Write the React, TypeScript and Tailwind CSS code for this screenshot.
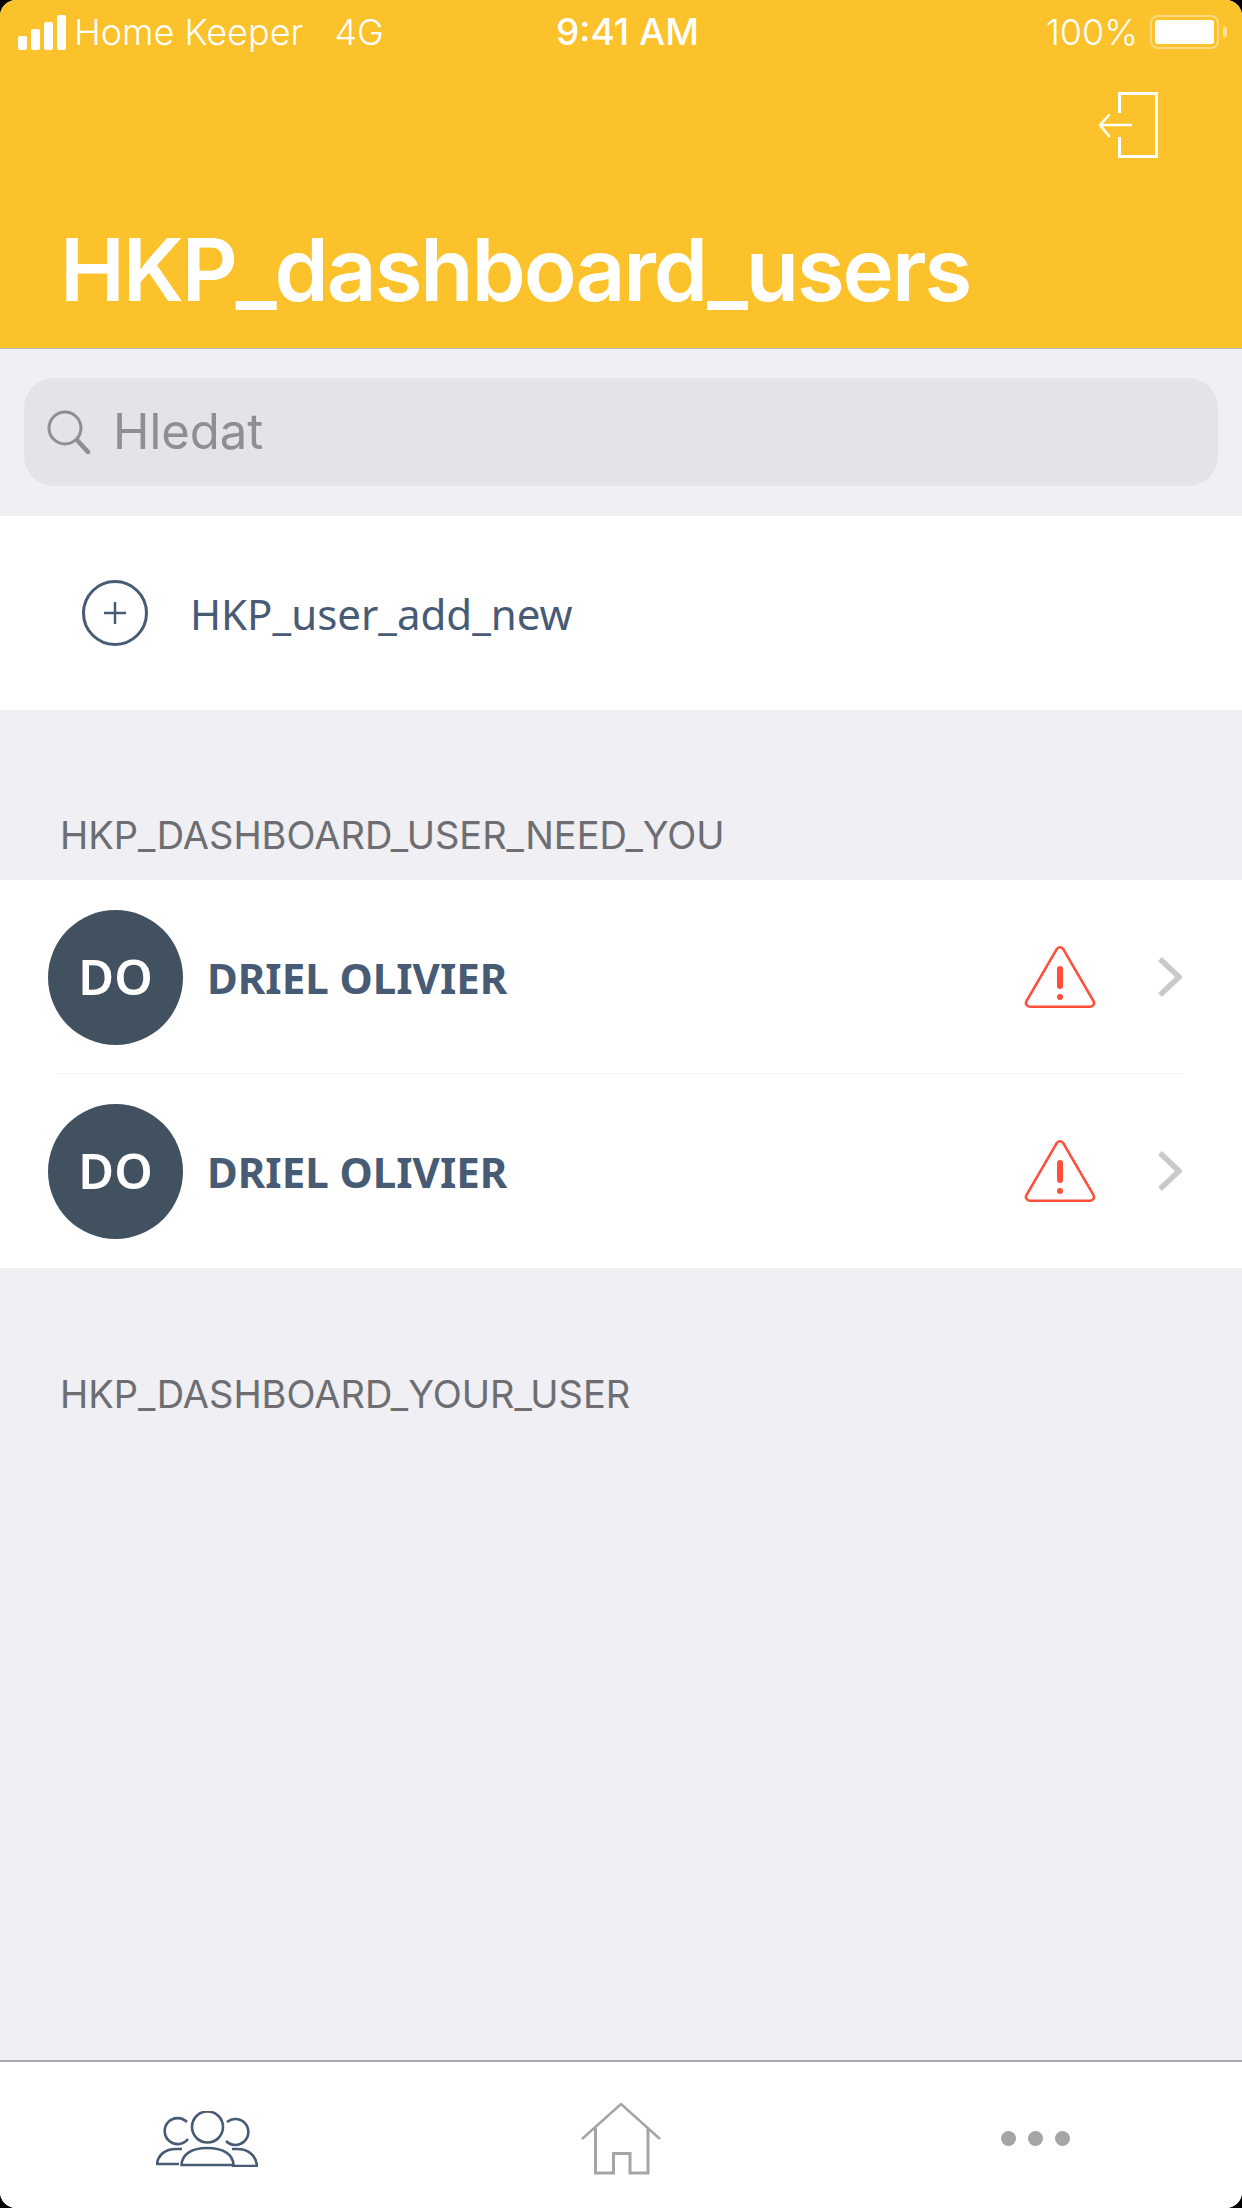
const needYou = [{ id: 1, initials: 'DO', name: 'DRIEL OLIVIER' }, { id: 2, initials: 'DO', name: 'DRIEL OLIVIER' }];

function SignalBars() {
  return (
    <div className="flex items-end gap-[4px]">
      <div className="w-[9px] h-[14px] rounded-[2px] bg-white" />
      <div className="w-[9px] h-[21px] rounded-[2px] bg-white" />
      <div className="w-[9px] h-[28px] rounded-[2px] bg-white" />
      <div className="w-[9px] h-[35px] rounded-[2px] bg-white" />
    </div>
  );
}

function Battery() {
  return (
    <div className="flex items-center gap-[4px]">
      <div className="w-[69px] h-[34px] rounded-[8px] border-[2px] border-white/40 p-[3px]">
        <div className="w-full h-full rounded-[3px] bg-white" />
      </div>
      <div className="w-[4px] h-[12px] rounded-r-full bg-white/50" />
    </div>
  );
}

function WarningIcon() {
  return (
    <svg width="72" height="62" viewBox="0 0 72 62" fill="none">
      <path d="M36 1.300c1.600 0 2.600.7 3.400 2l30 51.500c1.700 3-.2 5.900-3.500 5.900H6.100c-3.300 0-5.200-2.900-3.500-5.900l30-51.500c.8-1.300 1.800-2 3.400-2z" stroke="#FD4F39" strokeWidth="2.600" />
      <rect x="33" y="20" width="6" height="23" fill="#FD4F39" rx="3" />
      <circle cx="36" cy="51" r="3" fill="#FD4F39" />
    </svg>
  );
}

function UserRow({ initials, name, last }: { initials: string; name: string; last?: boolean }) {
  return (
    <div className="relative h-[194px] pl-[48px] pr-[60px] flex items-center">
      <div className="w-[135px] h-[135px] rounded-full bg-[#41515F] flex items-center justify-center text-white text-[49px] font-semibold font-['Noto_Sans',sans-serif] shrink-0">
        {initials}
      </div>
      <div className="ml-[24px] flex-1 text-[#475B75] text-[42px] font-bold font-['Noto_Sans',sans-serif]">{name}</div>
      <WarningIcon />
      <svg className="ml-[62px]" width="24" height="40" viewBox="0 0 24 40" fill="none">
        <path d="M2 2l19 18L2 38" stroke="#C8C8CD" strokeWidth="5.500" />
      </svg>
      {!last && <div className="absolute left-[57px] right-[60px] bottom-0 h-px bg-[#F2F2F5]" />}
    </div>
  );
}

export default function App() {
  return (
    <div className="w-[1242px] h-[2208px] bg-black font-['Inter',sans-serif]">
      <div className="w-full h-full flex flex-col rounded-[16px] overflow-hidden bg-[#EFEFF4]">
        {/* yellow header with status bar */}
        <div className="h-[349px] shrink-0 bg-[#FBC22B] border-b border-[#B9B9BB] flex flex-col text-white">
          <div className="relative h-[64px] pl-[18px] pr-[15px] flex items-center justify-between text-[36px]">
            <div className="flex items-center">
              <SignalBars />
              <span className="ml-[8px] font-light">Home Keeper</span>
              <span className="ml-[31px] font-light">4G</span>
            </div>
            <span className="absolute left-[556px] text-[37px] font-medium">9:41 AM</span>
            <div className="flex items-center gap-[12px]">
              <span className="font-light">100%</span>
              <Battery />
            </div>
          </div>
          <div className="flex justify-end pr-[84px] mt-[28px]">
            <svg width="60" height="66" viewBox="0 0 60 66" fill="none" stroke="white">
              <path d="M21.500 21V1.500H58.500V64.500H21.500V45" strokeWidth="3" />
              <path d="M33 33H2M11 23L2 33L11 44" strokeWidth="2.500" strokeLinecap="round" />
            </svg>
          </div>
          <h1 className="mt-[62px] ml-[60px] text-[87px] leading-[100px] font-semibold tracking-[-2.1px]">HKP_dashboard_users</h1>
        </div>

        {/* search */}
        <div className="h-[167px] shrink-0 px-[24px] pt-[29px]">
          <div className="h-[108px] rounded-[30px] bg-[#E3E3E8] flex items-center pl-[23px] text-[#8E8E93]">
            <svg width="44" height="44" viewBox="0 0 44 44" fill="none" stroke="currentColor">
              <circle cx="18" cy="18" r="16" strokeWidth="3" />
              <path d="M30 30l11 12" strokeWidth="4.500" strokeLinecap="round" />
            </svg>
            <span className="ml-[22px] text-[49px]">Hledat</span>
          </div>
        </div>

        {/* add new */}
        <div className="h-[194px] shrink-0 bg-white flex items-center pl-[82px] text-[#475B75]">
          <svg width="66" height="66" viewBox="0 0 66 66" fill="none" stroke="#475B75">
            <circle cx="33" cy="33" r="31.500" strokeWidth="3" />
            <path d="M33 22v22M22 33h22" strokeWidth="2.500" />
          </svg>
          <span className="ml-[42px] text-[42px] font-['Noto_Sans',sans-serif]">HKP_user_add_new</span>
        </div>

        <div className="h-[170px] shrink-0 flex items-end pl-[60px] pb-[23px] text-[#6D6D72] text-[38px] leading-[44px]">
          HKP_DASHBOARD_USER_NEED_YOU
        </div>

        <div className="shrink-0 bg-white">
          {needYou.map((user, i) => (
            <UserRow key={user.id} initials={user.initials} name={user.name} last={i === needYou.length - 1} />
          ))}
        </div>

        <div className="h-[171px] shrink-0 flex items-end pl-[60px] pb-[23px] text-[#6D6D72] text-[38px] leading-[44px]">
          HKP_DASHBOARD_YOUR_USER
        </div>

        <div className="flex-1" />

        {/* tab bar */}
        <div className="h-[148px] shrink-0 bg-white border-t-[2px] border-[#A9A9AE] grid grid-cols-3 items-center justify-items-center pt-[7px]">
          <svg width="102" height="56" viewBox="0 0 102 56" fill="none" stroke="#475B75" strokeWidth="2.600">
            <path d="M31 11A13 13 0 1 0 32 28" />
            <circle cx="51.500" cy="16" r="15.500" />
            <path d="M71 11A13 13 0 1 1 70 30" />
            <path d="M26 38H20C9 38 2 44 1 53H23" />
            <path d="M25.500 54C26 43 36 37 51 37C67 37 77 43 77.500 54Z" />
            <path d="M76 38H81C93 38 100 45 101 55H76" />
          </svg>
          <svg width="80" height="72" viewBox="0 0 80 72" fill="none" stroke="#A5A5A5" strokeWidth="3">
            <path d="M1 36L40 1L79 36" strokeWidth="2.500" />
            <path d="M14.500 25V70H32.500V50.500H49V70H67V25" />
          </svg>
          <div className="flex gap-[12px]">
            <div className="w-[15px] h-[15px] rounded-full bg-[#A5A5A5]" />
            <div className="w-[15px] h-[15px] rounded-full bg-[#A5A5A5]" />
            <div className="w-[15px] h-[15px] rounded-full bg-[#A5A5A5]" />
          </div>
        </div>
      </div>
    </div>
  );
}
